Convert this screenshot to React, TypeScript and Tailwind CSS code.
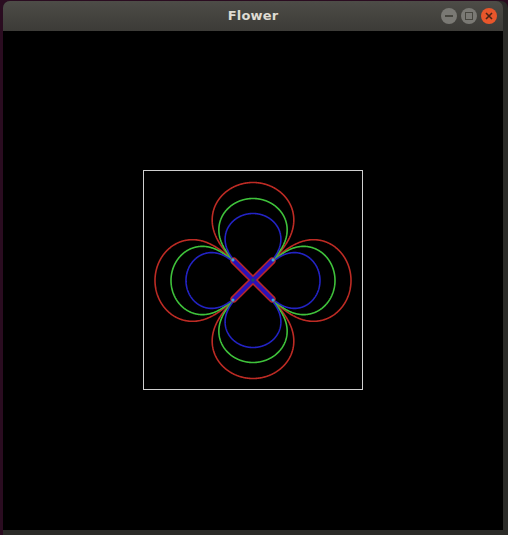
import React from 'react';

// polar "flower": r = R * |cos 2θ|^0.3, petals on the axes
function flowerPath(R: number, cx: number, cy: number) {
  const pts: string[] = [];
  const n = 1440;
  for (let i = 0; i <= n; i++) {
    const t = (i / n) * Math.PI * 2;
    const r = R * Math.pow(Math.abs(Math.cos(2 * t)), 0.3);
    const x = cx + r * Math.cos(t);
    const y = cy + r * Math.sin(t);
    pts.push(`${i === 0 ? 'M' : 'L'}${x.toFixed(2)} ${y.toFixed(2)}`);
  }
  return pts.join(' ');
}

function Flower() {
  const c = 109;
  const L = 27;
  const d = L / Math.SQRT2;
  return (
    <svg width="218" height="218" viewBox="0 0 218 218">
      <path d={flowerPath(98, c, c + 0.5)} fill="none" stroke="#bd2b24" strokeWidth="1.6" />
      <path d={flowerPath(82, c, c + 0.5)} fill="none" stroke="#3fc23b" strokeWidth="1.6" />
      <path d={flowerPath(67, c, c + 0.5)} fill="none" stroke="#2323c4" strokeWidth="1.6" />
      <g strokeLinecap="round">
        <line x1={c - d} y1={c - d} x2={c + d} y2={c + d} stroke="#b8262a" strokeWidth="7" />
        <line x1={c - d} y1={c + d} x2={c + d} y2={c - d} stroke="#b8262a" strokeWidth="7" />
        <line x1={c - d} y1={c - d} x2={c + d} y2={c + d} stroke="#2a12b8" strokeWidth="4" />
        <line x1={c - d} y1={c + d} x2={c + d} y2={c - d} stroke="#2a12b8" strokeWidth="4" />
      </g>
      {[[-1, -1], [1, -1], [-1, 1], [1, 1]].map(([sx, sy], i) => (
        <circle key={i} cx={c + sx * (d + 1)} cy={c + sy * (d + 1)} r="1.6" fill="#3aa8d8" />
      ))}
      <circle cx={c} cy={c} r="1.8" fill="#1a4a6a" />
    </svg>
  );
}

export default function App() {
  return (
    <div className="w-[508px] h-[535px] bg-[#2a0c20] overflow-hidden">
      <div className="ml-[3px] mt-[1px] w-[505px] h-[534px] bg-[#2b2b28] rounded-t-[7px] flex flex-col">
        <div className="relative h-[30px] w-[500px] rounded-t-[7px] bg-gradient-to-b from-[#4d4c47] to-[#3c3b37] flex items-center justify-center">
          <span className="font-['DejaVu_Sans',sans-serif] font-bold text-[13px] text-[#dfdbd2] tracking-[0.2px]">
            Flower
          </span>
          <div className="absolute right-[6px] top-[7px] flex gap-[4px]">
            <div className="w-[16px] h-[16px] rounded-full bg-[#7a7974] flex items-center justify-center">
              <div className="w-[8px] h-[2px] bg-[#47463f]" />
            </div>
            <div className="w-[16px] h-[16px] rounded-full bg-[#7a7974] flex items-center justify-center">
              <div className="w-[8px] h-[8px] border-[1.5px] border-[#47463f]" />
            </div>
            <div className="w-[16px] h-[16px] rounded-full bg-[#e8562b] flex items-center justify-center">
              <svg width="8" height="8" viewBox="0 0 8 8">
                <path d="M1 1 L7 7 M7 1 L1 7" stroke="#4a2416" strokeWidth="1.6" />
              </svg>
            </div>
          </div>
        </div>
        <div className="w-[500px] h-[499px] bg-black flex items-center justify-center">
          <div className="w-[220px] h-[220px] border border-[#cfcfcf] mb-[1px]">
            <Flower />
          </div>
        </div>
      </div>
    </div>
  );
}
